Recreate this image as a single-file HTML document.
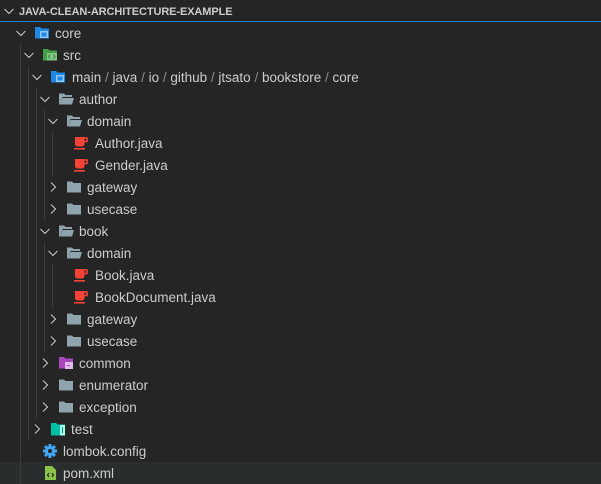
<!DOCTYPE html>
<html><head><style>
*{margin:0;padding:0;box-sizing:border-box}
body{width:601px;height:484px;background:#252526;overflow:hidden;position:relative;font-family:"Liberation Sans",sans-serif;font-size:13.5px;color:#cccccc}
.r{position:absolute;left:0;width:601px;height:22px}
.t{position:absolute;top:4px;line-height:15px;white-space:nowrap}
.ch{position:absolute;top:5px;width:12px;height:12px}
.ic{position:absolute;top:3px;width:16px;height:16px}
.g{position:absolute;width:1px;background:#3c3c3c}
.sep{color:#8a8a8a}
</style></head><body>
<div class="r" style="top:0"><svg class="ch" style="left:3px;top:5px" viewBox="0 0 12 12"><path d="M1.5 4l4.5 4.5 4.5-4.5" stroke="#ccc" fill="none" stroke-width="1"/></svg><div class="t" style="left:19px;font-weight:bold;font-size:11px;top:5px;letter-spacing:-0.1px">JAVA-CLEAN-ARCHITECTURE-EXAMPLE</div></div>
<div style="position:absolute;top:21px;left:0;width:601px;height:1px;background:#1f7fc2"></div>
<div class="r" style="top:462px;background:#2a2d2e"></div>
<div class="g" style="left:20px;top:44px;height:440px"></div>
<div class="g" style="left:28px;top:66px;height:374px"></div>
<div class="g" style="left:36px;top:88px;height:330px"></div>
<div class="g" style="left:44px;top:110px;height:110px"></div>
<div class="g" style="left:44px;top:242px;height:110px"></div>
<div class="g" style="left:52px;top:132px;height:44px"></div>
<div class="g" style="left:52px;top:264px;height:44px"></div>
<svg width="0" height="0" style="position:absolute"><defs>
<symbol id="dn" viewBox="0 0 12 12"><path d="M1.5 4l4.5 4.5 4.5-4.5" stroke="#ccc" fill="none" stroke-width="1"/></symbol>
<symbol id="rt" viewBox="0 0 12 12"><path d="M4 1.5l4.5 4.5-4.5 4.5" stroke="#ccc" fill="none" stroke-width="1"/></symbol>
<symbol id="fo" viewBox="0 0 16 16"><path d="M1 2.5h5l1.5 1.5H14v2H4.5L2.5 13.5H1z" fill="#90a4ae"/><path d="M4.5 7H16l-2 6.5H2.5z" fill="#90a4ae"/></symbol>
<symbol id="fc" viewBox="0 0 16 16"><path d="M1 2.5h5l1.5 1.5H15v9.5H1z" fill="#90a4ae"/></symbol>
<symbol id="fb" viewBox="0 0 16 16"><path d="M1 2h5l1.5 1.5H15V13.5H1z" fill="#1e88e5"/><rect x="6" y="6" width="8" height="7" fill="#90caf9"/><rect x="7.5" y="7.5" width="5" height="4" fill="#1e88e5"/></symbol>
<symbol id="fg" viewBox="0 0 16 16"><path d="M1 2h5l1.5 1.5H15V13.5H1z" fill="#43a047"/><rect x="5" y="6" width="10" height="7.5" fill="#81c784"/><path d="M8 7.5l-1.5 2 1.5 2M11.5 7.5l1.5 2-1.5 2" stroke="#2e7d32" fill="none"/></symbol>
<symbol id="fp" viewBox="0 0 16 16"><path d="M1 2h5l1.5 1.5H15V13.5H1z" fill="#ab47bc"/><rect x="7" y="7" width="8" height="7" fill="#e1bee7"/><rect x="9" y="10" width="3" height="1" fill="#ab47bc"/></symbol>
<symbol id="ft" viewBox="0 0 16 16"><path d="M1 2h5l1.5 1.5H15V14.5H1z" fill="#00bfa5"/><rect x="10" y="4" width="5" height="10.5" fill="#a7ffeb"/><rect x="12" y="6" width="1" height="6" fill="#00897b"/></symbol>
<symbol id="jv" viewBox="0 0 16 16"><path d="M2 2h9.5v7a2.5 2.5 0 0 1-2.5 2.5H4.5A2.5 2.5 0 0 1 2 9z" fill="#f44336"/><path d="M11.5 3h2.5v3.5h-2.5" stroke="#f44336" stroke-width="1.6" fill="none"/><rect x="1" y="13" width="11" height="1.6" fill="#f44336"/></symbol>
</defs></svg>

<div class="r" style="top:22px"><svg class="ch" style="left:15px"><use href="#dn"/></svg><svg class="ic" style="left:34px"><use href="#fb"/></svg><div class="t" style="left:55px">core</div></div>
<div class="r" style="top:44px"><svg class="ch" style="left:23px"><use href="#dn"/></svg><svg class="ic" style="left:42px"><use href="#fg"/></svg><div class="t" style="left:63px">src</div></div>
<div class="r" style="top:66px"><svg class="ch" style="left:31px"><use href="#dn"/></svg><svg class="ic" style="left:50px"><use href="#fb"/></svg><div class="t" style="left:72px">main <span class="sep">/</span> java <span class="sep">/</span> io <span class="sep">/</span> github <span class="sep">/</span> jtsato <span class="sep">/</span> bookstore <span class="sep">/</span> core</div></div>
<div class="r" style="top:88px"><svg class="ch" style="left:39px"><use href="#dn"/></svg><svg class="ic" style="left:58px"><use href="#fo"/></svg><div class="t" style="left:79px">author</div></div>
<div class="r" style="top:110px"><svg class="ch" style="left:47px"><use href="#dn"/></svg><svg class="ic" style="left:66px"><use href="#fo"/></svg><div class="t" style="left:87px">domain</div></div>
<div class="r" style="top:132px"><svg class="ic" style="left:73px"><use href="#jv"/></svg><div class="t" style="left:95px">Author.java</div></div>
<div class="r" style="top:154px"><svg class="ic" style="left:73px"><use href="#jv"/></svg><div class="t" style="left:95px">Gender.java</div></div>
<div class="r" style="top:176px"><svg class="ch" style="left:47px"><use href="#rt"/></svg><svg class="ic" style="left:66px"><use href="#fc"/></svg><div class="t" style="left:87px">gateway</div></div>
<div class="r" style="top:198px"><svg class="ch" style="left:47px"><use href="#rt"/></svg><svg class="ic" style="left:66px"><use href="#fc"/></svg><div class="t" style="left:87px">usecase</div></div>
<div class="r" style="top:220px"><svg class="ch" style="left:39px"><use href="#dn"/></svg><svg class="ic" style="left:58px"><use href="#fo"/></svg><div class="t" style="left:79px">book</div></div>
<div class="r" style="top:242px"><svg class="ch" style="left:47px"><use href="#dn"/></svg><svg class="ic" style="left:66px"><use href="#fo"/></svg><div class="t" style="left:87px">domain</div></div>
<div class="r" style="top:264px"><svg class="ic" style="left:73px"><use href="#jv"/></svg><div class="t" style="left:95px">Book.java</div></div>
<div class="r" style="top:286px"><svg class="ic" style="left:73px"><use href="#jv"/></svg><div class="t" style="left:95px">BookDocument.java</div></div>
<div class="r" style="top:308px"><svg class="ch" style="left:47px"><use href="#rt"/></svg><svg class="ic" style="left:66px"><use href="#fc"/></svg><div class="t" style="left:87px">gateway</div></div>
<div class="r" style="top:330px"><svg class="ch" style="left:47px"><use href="#rt"/></svg><svg class="ic" style="left:66px"><use href="#fc"/></svg><div class="t" style="left:87px">usecase</div></div>
<div class="r" style="top:352px"><svg class="ch" style="left:39px"><use href="#rt"/></svg><svg class="ic" style="left:58px"><use href="#fp"/></svg><div class="t" style="left:79px">common</div></div>
<div class="r" style="top:374px"><svg class="ch" style="left:39px"><use href="#rt"/></svg><svg class="ic" style="left:58px"><use href="#fc"/></svg><div class="t" style="left:79px">enumerator</div></div>
<div class="r" style="top:396px"><svg class="ch" style="left:39px"><use href="#rt"/></svg><svg class="ic" style="left:58px"><use href="#fc"/></svg><div class="t" style="left:79px">exception</div></div>
<div class="r" style="top:418px"><svg class="ch" style="left:31px"><use href="#rt"/></svg><svg class="ic" style="left:50px"><use href="#ft"/></svg><div class="t" style="left:71px">test</div></div>
<div class="r" style="top:440px"><svg class="ic" style="left:42px" viewBox="0 0 16 16"><g fill="#42a5f5"><circle cx="8" cy="8" r="5"/><rect x="6.5" y="1" width="3" height="14"/><rect x="1" y="6.5" width="14" height="3"/><rect x="6.5" y="1" width="3" height="14" transform="rotate(45 8 8)"/><rect x="6.5" y="1" width="3" height="14" transform="rotate(-45 8 8)"/></g><circle cx="8" cy="8" r="2" fill="#252526"/></svg><div class="t" style="left:63px">lombok.config</div></div>
<div class="r" style="top:462px"><svg class="ic" style="left:42px" viewBox="0 0 16 16"><path d="M3 1h7l4 4v10H3z" fill="#8bc34a"/><path d="M7 8l-1.5 2L7 12M10 8l1.5 2L10 12" stroke="#2a2d2e" fill="none" stroke-width="1.2"/></svg><div class="t" style="left:63px">pom.xml</div></div>
</body></html>
